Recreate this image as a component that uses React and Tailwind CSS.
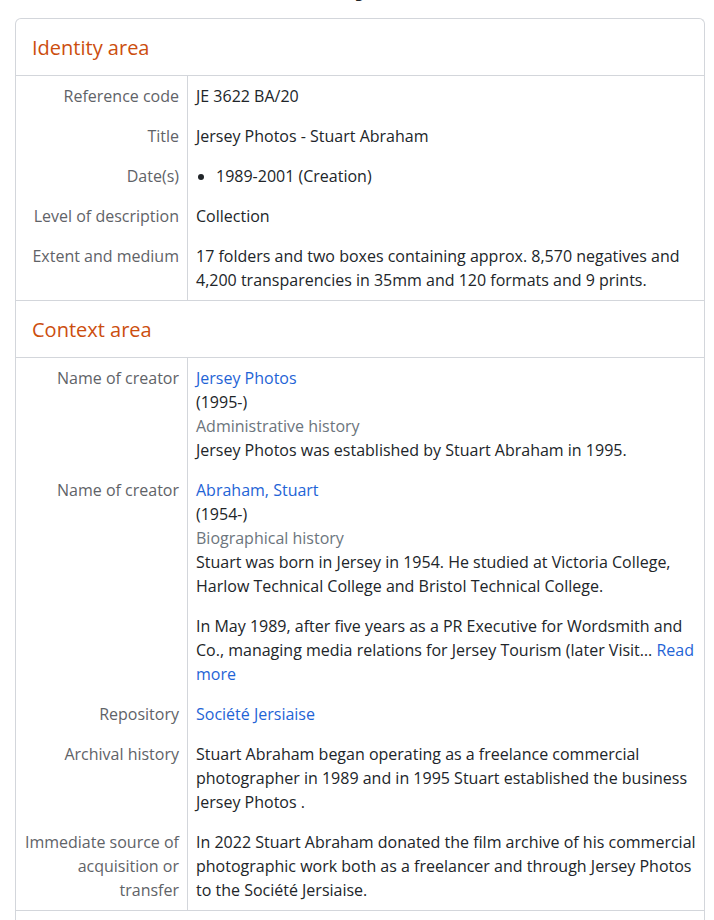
import React from 'react';

function Row({ label, children }) {
  return (
    <div className="flex">
      <div className="w-[172px] shrink-0 border-r border-[#d3d6db] py-2 pr-2 text-right text-[#5f6368]">
        {label}
      </div>
      <div className="flex-1 py-2 pl-2 pr-2 text-[#212529]">{children}</div>
    </div>
  );
}

function Section({ title, children }) {
  return (
    <section className="border-b border-[#d3d6db]">
      <h2 className="border-b border-[#d3d6db] px-4 pt-[17px] pb-[15px] text-[20px] leading-6 text-[#cc4e0e]">
        {title}
      </h2>
      <div>{children}</div>
    </section>
  );
}

const link = 'text-[#1f64d6] hover:underline';

export default function App() {
  return (
    <div className="h-[920px] overflow-hidden bg-white font-['Open_Sans',sans-serif] text-[16px] leading-6">
      <div className="h-[18px] overflow-hidden">
        <h1 className="-mt-[41px] pl-[281px] text-[30px] font-bold leading-[48px] text-[#212529]">
          Jersey Photos
        </h1>
      </div>
      <div className="ml-[15px] w-[690px] rounded-t-md border border-b-0 border-[#d3d6db]">
        <Section title="Identity area">
          <Row label="Reference code">JE 3622 BA/20</Row>
          <Row label="Title">Jersey Photos - Stuart Abraham</Row>
          <Row label="Date(s)">
            <ul className="list-disc pl-5">
              <li>1989-2001 (Creation)</li>
            </ul>
          </Row>
          <Row label="Level of description">Collection</Row>
          <Row label="Extent and medium">
            17 folders and two boxes containing approx. 8,570 negatives and 4,200 transparencies in 35mm
            and 120 formats and 9 prints.
          </Row>
        </Section>
        <Section title="Context area">
          <Row label="Name of creator">
            <a href="#" className={link}>Jersey Photos</a>
            <div>(1995-)</div>
            <div className="text-[#6c757d]">Administrative history</div>
            <p>Jersey Photos was established by Stuart Abraham in 1995.</p>
          </Row>
          <Row label="Name of creator">
            <a href="#" className={link}>Abraham, Stuart</a>
            <div>(1954-)</div>
            <div className="text-[#6c757d]">Biographical history</div>
            <p className="mb-4">
              Stuart was born in Jersey in 1954. He studied at Victoria College, Harlow Technical College
              and Bristol Technical College.
            </p>
            <p>
              In May 1989, after five years as a PR Executive for Wordsmith and Co., managing media
              relations for Jersey Tourism (later Visit…{' '}
              <a href="#" className={link}>Read more</a>
            </p>
          </Row>
          <Row label="Repository">
            <a href="#" className={link}>Société Jersiaise</a>
          </Row>
          <Row label="Archival history">
            Stuart Abraham began operating as a freelance commercial photographer in 1989 and in 1995
            Stuart established the business Jersey Photos .
          </Row>
          <Row label="Immediate source of acquisition or transfer">
            In 2022 Stuart Abraham donated the film archive of his commercial photographic work both as a
            freelancer and through Jersey Photos to the Société Jersiaise.
          </Row>
        </Section>
        <div className="h-12" />
      </div>
    </div>
  );
}
